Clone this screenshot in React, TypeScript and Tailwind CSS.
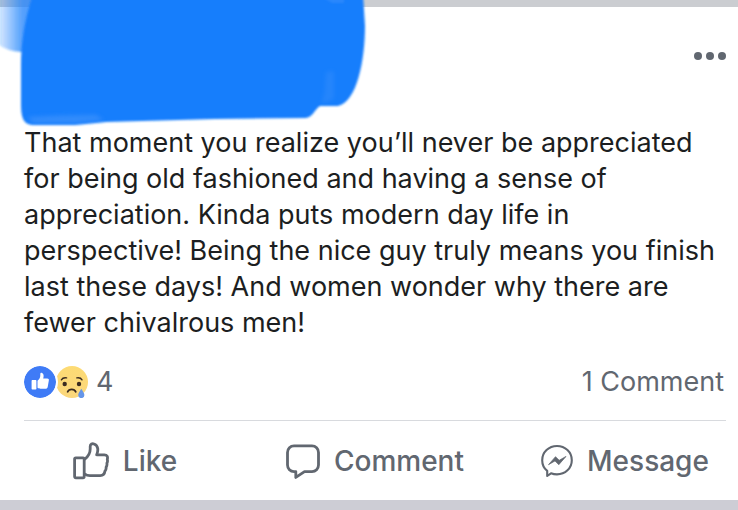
import type { ReactNode } from "react";

const postText =
  "That moment you realize you’ll never be appreciated for being old fashioned and having a sense of appreciation. Kinda puts modern day life in perspective! Being the nice guy truly means you finish last these days! And women wonder why there are fewer chivalrous men!";

function Scribble() {
  return (
    <svg
      className="pointer-events-none absolute top-0 left-0"
      width="380"
      height="135"
      viewBox="0 0 380 135"
      aria-hidden="true"
    >
      <defs>
        <filter id="soft" x="-10%" y="-10%" width="120%" height="120%">
          <feGaussianBlur stdDeviation="0.9" />
        </filter>
        <filter id="softer" x="-50%" y="-50%" width="200%" height="200%">
          <feGaussianBlur stdDeviation="2" />
        </filter>
        <linearGradient id="fade" x1="0" x2="1" y1="0" y2="0">
          <stop offset="0" stopColor="#177efc" stopOpacity="0.15" />
          <stop offset="0.6" stopColor="#177efc" stopOpacity="0.75" />
        </linearGradient>
      </defs>
      <path d="M-2 -8H40V52H22Q6 51 -2 44Z" fill="url(#fade)" filter="url(#soft)" />
      <g filter="url(#soft)">
        <path
          d="M33 -6C25 18 21 42 21 66V104C21 119 24 125 34 125H75L106 122L215 119L306 118C313 117 314 110 320 106H338C357 102 365 60 365 26L363 -6Z"
          fill="#177efc"
        />
      </g>
      <path d="M28 117Q60 115 96 115L104 120L75 123H35Q30 122 28 117Z" fill="#4796fc" opacity="0.6" filter="url(#softer)" />
      <path d="M326 72L334 71V98Q330 103 321 103Q325 95 325 85Z" fill="#4796fc" opacity="0.3" filter="url(#softer)" />
      <path d="M324 -2H344V3H332Z" fill="#4796fc" opacity="0.4" filter="url(#soft)" />
    </svg>
  );
}

function LikeReaction() {
  return (
    <svg className="z-10 rounded-full ring-2 ring-white" width="32" height="32" viewBox="0 0 32 32" aria-hidden="true">
      <circle cx="16" cy="16" r="16" fill="#3f7bf6" />
      <rect x="7.6" y="14" width="4.8" height="9.5" rx="0.8" fill="#fff" />
      <path
        d="M13.5 14.7C15.5 13 16.3 11.5 16.3 9.3V8C16.3 6.8 17.2 6.6 18 6.9C19.8 7.6 20 9.8 19.2 12.5H23.2C24.5 12.5 25.2 13.4 24.8 14.7L23.7 20.9C23.4 22.1 22.7 22.7 21.5 22.7H16.5C15.2 22.7 14.4 22.3 13.5 21.8Z"
        fill="#fff"
      />
    </svg>
  );
}

function SadReaction() {
  return (
    <svg width="32" height="32" viewBox="0 0 32 32" aria-hidden="true">
      <defs>
        <linearGradient id="face" x1="0" x2="0" y1="0" y2="1">
          <stop offset="0" stopColor="#fddb74" />
          <stop offset="1" stopColor="#fbd77c" />
        </linearGradient>
      </defs>
      <circle cx="16" cy="16" r="16" fill="url(#face)" />
      <g fill="none" stroke="#3a2b20" strokeLinecap="round">
        <path d="M5.4 13.8C6.3 12.3 8.2 11.5 10.6 11.9M20.8 11.9C23.2 11.5 25.1 12.3 26 13.8" strokeWidth="1.4" />
        <path d="M11.6 25.8C13 22.6 18.4 22.6 19.8 25.8" strokeWidth="1.7" />
      </g>
      <circle cx="8.7" cy="18" r="2.2" fill="#3a2b20" />
      <circle cx="23" cy="18" r="2.2" fill="#3a2b20" />
      <path d="M25.3 22.8C26.4 25 28.4 27 28.4 29A3.1 3.1 0 0 1 22.2 29C22.2 27 24.2 25 25.3 22.8Z" fill="#6595e8" />
    </svg>
  );
}

function LikeIcon() {
  return (
    <svg width="36" height="38" viewBox="0 0 36 38" fill="none" stroke="#616770" strokeWidth="2.8" strokeLinejoin="round" aria-hidden="true">
      <rect x="1.6" y="15.8" width="9.6" height="20" rx="1.2" />
      <path d="M11.5 17.5C15.3 14.5 17.2 11.5 17.2 7V4.5C17.2 2 19.2 1.4 21 2C25.7 3.5 25.3 8.8 23.7 12.8H31.4C34.2 12.8 35 15 34.3 17.4C34.7 18.8 34.6 20 33.9 21.2C34.2 22.8 33.9 24 33.1 25.2C33.3 26.9 32.9 28.1 31.9 29.2C31.6 32.3 30.2 33.6 27.2 33.6H17C14.5 33.6 13 32.9 11.5 31.8" />
    </svg>
  );
}

function CommentIcon() {
  return (
    <svg width="34" height="36" viewBox="0 0 34 36" fill="none" stroke="#616770" strokeWidth="2.8" strokeLinejoin="round" aria-hidden="true">
      <path d="M8 2.9H26A6.5 6.5 0 0 1 32.5 9.4V22.1A6.5 6.5 0 0 1 26 28.6H18.5L9.8 34.4V28.6H8A6.5 6.5 0 0 1 1.5 22.1V9.4A6.5 6.5 0 0 1 8 2.9Z" />
    </svg>
  );
}

function MessageIcon() {
  return (
    <svg width="32" height="34" viewBox="0 0 32 34" aria-hidden="true">
      <path
        d="M16 2C24.2 2 30.8 8.2 30.8 16.2S24.2 30.4 16 30.4C13.6 30.4 11.8 30 10 29.3L6.2 32V26.9C3 24.3 1.2 20.5 1.2 16.2C1.2 8.2 7.8 2 16 2Z"
        fill="none"
        stroke="#616770"
        strokeWidth="2.1"
        strokeLinejoin="round"
      />
      <path d="M7.5 20.7L14.5 12.7L18.2 16.3L25 12.4L17.8 20.7L14 16.9Z" fill="#616770" stroke="#616770" strokeWidth="0.7" strokeLinejoin="round" />
    </svg>
  );
}

function ActionButton({ icon, label }: { icon: ReactNode; label: string }) {
  return (
    <button type="button" className="flex items-center justify-center gap-3.5 text-[28px] leading-8 font-medium">
      {icon}
      <span>{label}</span>
    </button>
  );
}

export default function App() {
  return (
    <main className="relative overflow-hidden bg-white font-['Inter','Liberation_Sans',sans-serif] text-[#616770]">
      <div className="h-[7px] bg-[#cbcdd1]" />
      <article>
        <header className="flex h-[118px] items-start justify-end px-3 pt-[33px]">
          <button type="button" aria-label="More options" className="flex h-8 items-center gap-1 text-[#616770]">
            <span className="size-2 rounded-full bg-current" />
            <span className="size-2 rounded-full bg-current" />
            <span className="size-2 rounded-full bg-current" />
          </button>
        </header>
        <p className="pr-4 pl-6 text-[27px] leading-9 text-[#1c1e21]">{postText}</p>
        <div className="mr-3 ml-6 flex h-20 items-center justify-between border-b border-[#d8dade] pt-0.5 pr-0.5 text-[27px] leading-8">
          <div className="flex items-center">
            <LikeReaction />
            <SadReaction />
            <span className="ml-2">4</span>
          </div>
          <a href="#comments">1 Comment</a>
        </div>
        <div className="-mr-3 grid h-[79px] grid-cols-3">
          <ActionButton icon={<LikeIcon />} label="Like" />
          <ActionButton icon={<CommentIcon />} label="Comment" />
          <ActionButton icon={<MessageIcon />} label="Message" />
        </div>
      </article>
      <div className="h-[10px] bg-[#cdcdd5]" />
      <Scribble />
    </main>
  );
}
